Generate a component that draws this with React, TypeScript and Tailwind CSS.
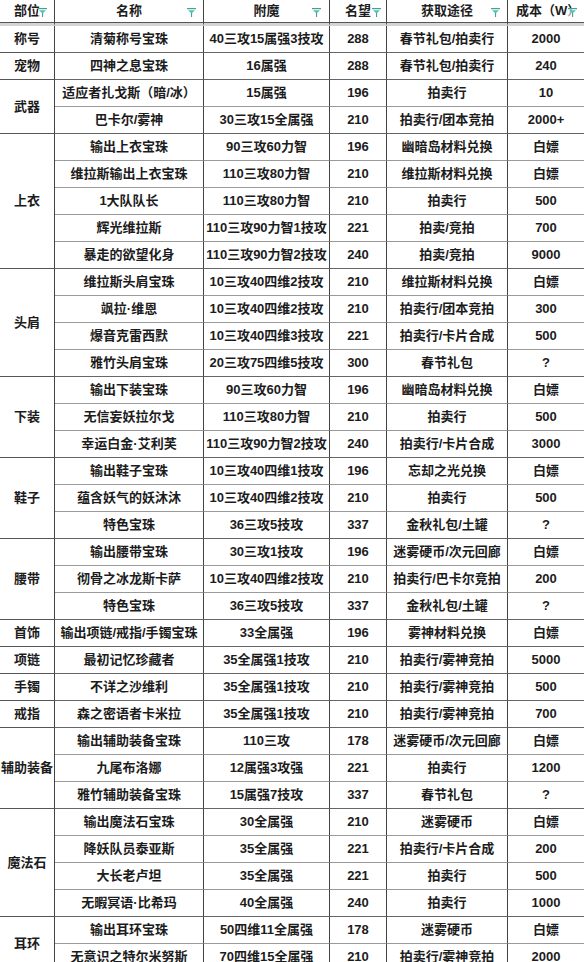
import React from 'react'

type Row = [string, string, string, string, string]

interface Group {
  slot: string
  rows: Row[]
}

const groups: Group[] = [
  { slot: '称号', rows: [['清菊称号宝珠', '40三攻15属强3技攻', '288', '春节礼包/拍卖行', '2000']] },
  { slot: '宠物', rows: [['四神之息宝珠', '16属强', '288', '春节礼包/拍卖行', '240']] },
  {
    slot: '武器',
    rows: [
      ['适应者扎戈斯（暗/冰）', '15属强', '196', '拍卖行', '10'],
      ['巴卡尔/雾神', '30三攻15全属强', '210', '拍卖行/团本竞拍', '2000+'],
    ],
  },
  {
    slot: '上衣',
    rows: [
      ['输出上衣宝珠', '90三攻60力智', '196', '幽暗岛材料兑换', '白嫖'],
      ['维拉斯输出上衣宝珠', '110三攻80力智', '210', '维拉斯材料兑换', '白嫖'],
      ['1大队队长', '110三攻80力智', '210', '拍卖行', '500'],
      ['辉光维拉斯', '110三攻90力智1技攻', '221', '拍卖/竞拍', '700'],
      ['暴走的欲望化身', '110三攻90力智2技攻', '240', '拍卖/竞拍', '9000'],
    ],
  },
  {
    slot: '头肩',
    rows: [
      ['维拉斯头肩宝珠', '10三攻40四维2技攻', '210', '维拉斯材料兑换', '白嫖'],
      ['飒拉·维恩', '10三攻40四维2技攻', '210', '拍卖行/团本竞拍', '300'],
      ['爆音克雷西默', '10三攻40四维3技攻', '221', '拍卖行/卡片合成', '500'],
      ['雅竹头肩宝珠', '20三攻75四维5技攻', '300', '春节礼包', '?'],
    ],
  },
  {
    slot: '下装',
    rows: [
      ['输出下装宝珠', '90三攻60力智', '196', '幽暗岛材料兑换', '白嫖'],
      ['无信妄妖拉尔戈', '110三攻80力智', '210', '拍卖行', '500'],
      ['幸运白金·艾利芙', '110三攻90力智2技攻', '240', '拍卖行/卡片合成', '3000'],
    ],
  },
  {
    slot: '鞋子',
    rows: [
      ['输出鞋子宝珠', '10三攻40四维1技攻', '196', '忘却之光兑换', '白嫖'],
      ['蕴含妖气的妖沐沐', '10三攻40四维2技攻', '210', '拍卖行', '500'],
      ['特色宝珠', '36三攻5技攻', '337', '金秋礼包/土罐', '?'],
    ],
  },
  {
    slot: '腰带',
    rows: [
      ['输出腰带宝珠', '30三攻1技攻', '196', '迷雾硬币/次元回廊', '白嫖'],
      ['彻骨之冰龙斯卡萨', '10三攻40四维2技攻', '210', '拍卖行/巴卡尔竞拍', '200'],
      ['特色宝珠', '36三攻5技攻', '337', '金秋礼包/土罐', '?'],
    ],
  },
  { slot: '首饰', rows: [['输出项链/戒指/手镯宝珠', '33全属强', '196', '雾神材料兑换', '白嫖']] },
  { slot: '项链', rows: [['最初记忆珍藏者', '35全属强1技攻', '210', '拍卖行/雾神竞拍', '5000']] },
  { slot: '手镯', rows: [['不详之沙维利', '35全属强1技攻', '210', '拍卖行/雾神竞拍', '500']] },
  { slot: '戒指', rows: [['森之密语者卡米拉', '35全属强1技攻', '210', '拍卖行/雾神竞拍', '700']] },
  {
    slot: '辅助装备',
    rows: [
      ['输出辅助装备宝珠', '110三攻', '178', '迷雾硬币/次元回廊', '白嫖'],
      ['九尾布洛娜', '12属强3攻强', '221', '拍卖行', '1200'],
      ['雅竹辅助装备宝珠', '15属强7技攻', '337', '春节礼包', '?'],
    ],
  },
  {
    slot: '魔法石',
    rows: [
      ['输出魔法石宝珠', '30全属强', '210', '迷雾硬币', '白嫖'],
      ['降妖队员泰亚斯', '35全属强', '221', '拍卖行/卡片合成', '200'],
      ['大长老卢坦', '35全属强', '221', '拍卖行', '500'],
      ['无暇冥语·比希玛', '40全属强', '240', '拍卖行', '1000'],
    ],
  },
  {
    slot: '耳环',
    rows: [
      ['输出耳环宝珠', '50四维11全属强', '178', '迷雾硬币', '白嫖'],
      ['无意识之特尔米努斯', '70四维15全属强', '210', '拍卖行/雾神竞拍', '2000'],
    ],
  },
]

// row-span classes written out so tailwind picks them up
const spans: Record<number, string> = {
  1: 'row-span-1',
  2: 'row-span-2',
  3: 'row-span-3',
  4: 'row-span-4',
  5: 'row-span-5',
}

const headers = [
  { label: '部位', icon: 'right-[7px]' },
  { label: '名称', icon: 'right-[7px]' },
  { label: '附魔', icon: 'right-[8px]' },
  { label: '名望', icon: 'right-[5px]' },
  { label: '获取途径', icon: 'right-[7px]' },
  { label: '成本（W）', icon: 'right-[7px]' },
]

function FilterIcon({ className }: { className: string }) {
  return (
    <svg className={`absolute top-[8px] h-[9px] w-[9px] ${className}`} viewBox="0 0 9 9">
      <rect x="0" y="0" width="9" height="9" fill="#fff" opacity="0.6" />
      <rect x="0" y="0" width="9" height="1.2" fill="#3aa596" />
      <path d="M1 2.2h7L4.5 5.6z" fill="#5dbcae" />
      <rect x="4" y="5" width="1.1" height="4" fill="#3aa596" />
    </svg>
  )
}

const cols = 'grid grid-cols-[55px_149px_126px_57px_121px_76px]'
const cell = 'flex items-center justify-center whitespace-nowrap overflow-hidden border-r border-r-[#444]'

export default function App() {
  return (
    <div
      className="w-[584px] h-[962px] overflow-hidden bg-white text-[13px] font-bold text-[#1c1c1c]"
      style={{ fontFamily: '"Liberation Sans", "Noto Sans CJK SC", sans-serif' }}
    >
      {/* header */}
      <div className={`${cols} h-[26px]`}>
        {headers.map((h, i) => (
          <div
            key={h.label}
            className={`relative ${cell} pb-[2px] border-b-[3px] border-b-[#d4d4d4] shadow-[inset_0_-1px_0_#555] ${i === 5 ? 'border-r-0 justify-start pl-[8px]' : ''}`}
          >
            <span>{h.label}</span>
            <FilterIcon className={h.icon} />
          </div>
        ))}
      </div>

      {/* body */}
      <div className={`${cols} auto-rows-[27px]`}>
        {groups.map((g) =>
          [
            <div key={g.slot} className={`${cell} ${spans[g.rows.length]} border-b border-b-[#555]`}>
              {g.slot}
            </div>,
            ...g.rows.map((r, ri) => {
              const last = ri === g.rows.length - 1
              const line = last ? 'border-b border-b-[#666]' : 'border-b border-b-[#9a9a9a]'
              return r.map((v, ci) => (
                <div
                  key={`${g.slot}-${ri}-${ci}`}
                  className={`${cell} ${line} ${ci === 4 ? 'border-r-0' : ''}`}
                >
                  {v}
                </div>
              ))
            }),
          ]
        )}
      </div>
    </div>
  )
}
